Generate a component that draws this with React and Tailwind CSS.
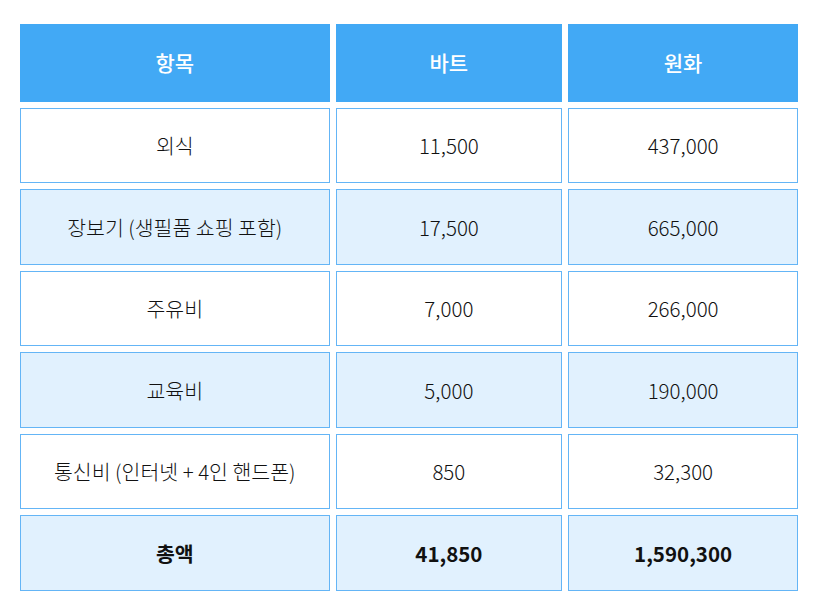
import React from 'react'

const rows = [
  { item: '외식', baht: '11,500', won: '437,000' },
  { item: '장보기 (생필품 쇼핑 포함)', baht: '17,500', won: '665,000' },
  { item: '주유비', baht: '7,000', won: '266,000' },
  { item: '교육비', baht: '5,000', won: '190,000' },
  { item: '통신비 (인터넷 + 4인 핸드폰)', baht: '850', won: '32,300' },
]

export default function App() {
  return (
    <div className="min-h-screen bg-white px-[14px] pt-[18px] font-['Noto_Sans_CJK_KR',sans-serif] text-[20.5px] font-light text-[#111]">
      <table className="border-separate border-spacing-[6px] text-center">
        <thead>
          <tr>
            <th className="h-[77.7px] w-[310px] bg-[#42a9f5] text-[21px] font-medium text-white">항목</th>
            <th className="h-[77.7px] w-[227px] bg-[#42a9f5] text-[21px] font-medium text-white">바트</th>
            <th className="h-[77.7px] w-[230px] bg-[#42a9f5] text-[21px] font-medium text-white">원화</th>
          </tr>
        </thead>
        <tbody>
          {rows.map((r, i) => (
            <tr key={r.item} className={i % 2 ? 'bg-[#e1f1fe]' : 'bg-white'}>
              <td className="h-[75.5px] border border-[#64b5f6]">{r.item}</td>
              <td className="h-[75.5px] border border-[#64b5f6]">{r.baht}</td>
              <td className="h-[75.5px] border border-[#64b5f6]">{r.won}</td>
            </tr>
          ))}
          <tr className="bg-[#e1f1fe] font-semibold">
            <td className="h-[75.5px] border border-[#64b5f6]">총액</td>
            <td className="h-[75.5px] border border-[#64b5f6]">41,850</td>
            <td className="h-[75.5px] border border-[#64b5f6]">1,590,300</td>
          </tr>
        </tbody>
      </table>
    </div>
  )
}
